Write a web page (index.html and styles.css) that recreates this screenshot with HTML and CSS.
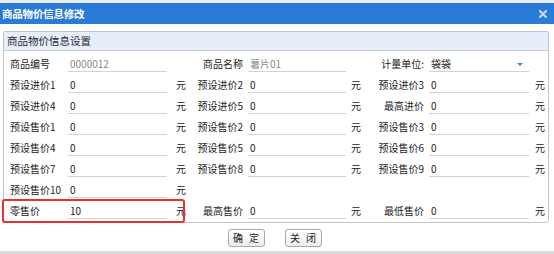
FILE: index.html
```html
<!DOCTYPE html>
<html lang="zh-CN">
<head>
<meta charset="utf-8">
<title>商品物价信息修改</title>
<link rel="stylesheet" href="styles.css">
</head>
<body>
<div class="dialog">
  <div class="topstrip"></div>
  <div class="titlebar">
    <span class="title">商品物价信息修改</span>
    <svg class="close" width="8" height="8" viewBox="0 0 8 8"><path d="M1 1L7 7M7 1L1 7" stroke="#c9d3df" stroke-width="2.2" stroke-linecap="square"/></svg>
  </div>
  <div class="content">
    <div class="panel">
      <div class="panel-head">商品物价信息设置</div>
      <div class="form">
        <div class="lbl">商品编号</div><div class="inp muted">0000012</div><div class="unit"></div>
        <div class="lbl r">商品名称</div><div class="inp muted">薯片01</div><div class="unit u2"></div>
        <div class="lbl r">计量单位:</div><div class="inp select">袋袋<span class="arrow"></span></div><div class="unit u3"></div>

        <div class="lbl">预设进价1</div><div class="inp">0</div><div class="unit">元</div>
        <div class="lbl r">预设进价2</div><div class="inp">0</div><div class="unit u2">元</div>
        <div class="lbl r">预设进价3</div><div class="inp">0</div><div class="unit u3">元</div>

        <div class="lbl">预设进价4</div><div class="inp">0</div><div class="unit">元</div>
        <div class="lbl r">预设进价5</div><div class="inp">0</div><div class="unit u2">元</div>
        <div class="lbl r">最高进价</div><div class="inp">0</div><div class="unit u3">元</div>

        <div class="lbl">预设售价1</div><div class="inp">0</div><div class="unit">元</div>
        <div class="lbl r">预设售价2</div><div class="inp">0</div><div class="unit u2">元</div>
        <div class="lbl r">预设售价3</div><div class="inp">0</div><div class="unit u3">元</div>

        <div class="lbl">预设售价4</div><div class="inp">0</div><div class="unit">元</div>
        <div class="lbl r">预设售价5</div><div class="inp">0</div><div class="unit u2">元</div>
        <div class="lbl r">预设售价6</div><div class="inp">0</div><div class="unit u3">元</div>

        <div class="lbl">预设售价7</div><div class="inp">0</div><div class="unit">元</div>
        <div class="lbl r">预设售价8</div><div class="inp">0</div><div class="unit u2">元</div>
        <div class="lbl r">预设售价9</div><div class="inp">0</div><div class="unit u3">元</div>

        <div class="lbl">预设售价10</div><div class="inp">0</div><div class="unit">元</div>
        <div class="span6"></div>

        <div class="lbl">零售价</div><div class="inp">10</div><div class="unit">元</div>
        <div class="lbl r">最高售价</div><div class="inp">0</div><div class="unit u2">元</div>
        <div class="lbl r">最低售价</div><div class="inp">0</div><div class="unit u3">元</div>
      </div>
    </div>
    <div class="buttons">
      <button class="btn">确 定</button>
      <button class="btn">关 闭</button>
    </div>
  </div>
  <div class="highlight"></div>
  <div class="bottomstrip"></div>
</div>
</body>
</html>
```
FILE: styles.css
```css
html, body {
  margin: 0;
  padding: 0;
  background: #ffffff;
}
body {
  font-family: "Noto Sans CJK SC", "Noto Sans", sans-serif;
  font-size: 10px;
  color: #222;
}
.dialog {
  position: relative;
  width: 554px;
  height: 254px;
  display: flex;
  flex-direction: column;
  overflow: hidden;
}
.topstrip {
  height: 3px;
  background: #ececec;
}
.titlebar {
  height: 21px;
  background: #2a7bd7;
  display: flex;
  align-items: center;
  justify-content: space-between;
  padding: 0 7px 0 2px;
}
.title {
  color: #fff;
  font-weight: bold;
  font-size: 10.5px;
  letter-spacing: -0.2px;
}
.close {
  display: block;
  margin-top: 1px;
}
.content {
  flex: 1;
  padding: 7px 5px 0 3px;
}
.panel {
  border: 1px solid #c3c3c3;
  border-radius: 2px 2px 3px 3px;
  background: #fff;
}
.panel-head {
  height: 18px;
  line-height: 18px;
  background: #e6eff9;
  border-bottom: 1px solid #c6ccd4;
  padding-left: 3px;
  font-size: 10.5px;
  color: #1f2a36;
}
.form {
  display: grid;
  grid-template-columns: 58px 99px 26px 55px 98px 28px 55px 100px 19px;
  grid-auto-rows: 21px;
  padding: 2px 0 1px 6px;
}
.lbl {
  display: flex;
  align-items: center;
  white-space: nowrap;
}
.lbl.r {
  justify-content: flex-end;
  padding-right: 5px;
}
.inp {
  align-self: center;
  height: 16px;
  line-height: 17px;
  border-bottom: 1px solid #d2d2d2;
  padding-left: 2px;
  color: #222;
  position: relative;
}
.inp.muted {
  color: #8a8a8a;
}
.arrow {
  position: absolute;
  right: 6px;
  top: 8px;
  width: 0;
  height: 0;
  border-left: 3px solid transparent;
  border-right: 3px solid transparent;
  border-top: 3px solid #4f83c6;
}
.unit {
  display: flex;
  align-items: center;
  padding-left: 9px;
}
.unit.u2 {
  padding-left: 5px;
}
.unit.u3 {
  padding-left: 6px;
}
.span6 {
  grid-column: span 6;
}
.buttons {
  display: flex;
  justify-content: center;
  gap: 20px;
  margin-top: 6px;
  padding-right: 3px;
}
.btn {
  width: 37px;
  height: 18px;
  padding: 0;
  border: 1px solid #a9a9a9;
  border-radius: 3px;
  background: linear-gradient(#ffffff, #ececec);
  font-family: "Noto Sans CJK SC", sans-serif;
  font-size: 10px;
  white-space: nowrap;
  word-spacing: 4px;
  color: #222;
  line-height: 16px;
  text-align: center;
}
.highlight {
  position: absolute;
  left: 2px;
  top: 199px;
  width: 183px;
  height: 24px;
  box-sizing: border-box;
  border: 2px solid #e8302c;
  border-radius: 3px;
  pointer-events: none;
}
.bottomstrip {
  height: 3px;
  background: #dcdcdc;
}
```
